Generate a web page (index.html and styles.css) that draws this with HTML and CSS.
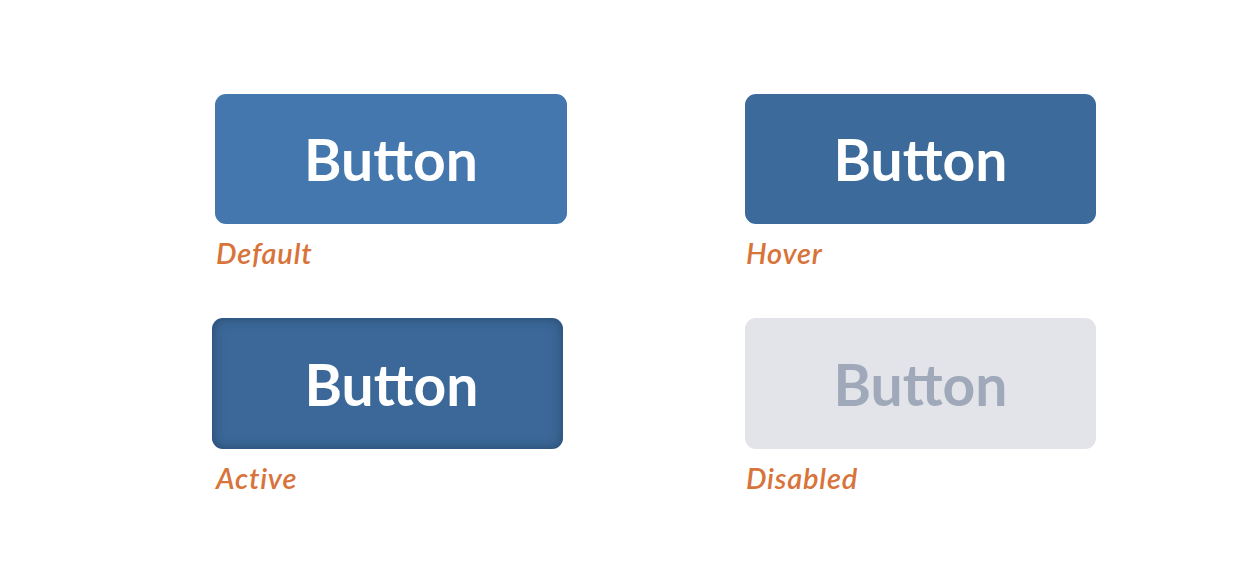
FILE: index.html
```html
<!DOCTYPE html>
<html>
<head>
<meta charset="utf-8">
<link rel="stylesheet" href="styles.css">
</head>
<body>
<div class="grid">
  <div class="cell">
    <div class="btn btn-default">Button</div>
    <div class="label">Default</div>
  </div>
  <div class="cell">
    <div class="btn btn-hover">Button</div>
    <div class="label">Hover</div>
  </div>
  <div class="cell">
    <div class="btn btn-active">Button</div>
    <div class="label">Active</div>
  </div>
  <div class="cell">
    <div class="btn btn-disabled">Button</div>
    <div class="label">Disabled</div>
  </div>
</div>
</body>
</html>
```

FILE: styles.css
```css
html, body {
  margin: 0;
  padding: 0;
  background: #ffffff;
}
body {
  font-family: Lato, "Noto Sans", sans-serif;
}
.grid {
  display: grid;
  grid-template-columns: 352px 351px;
  column-gap: 178px;
  row-gap: 48px;
  padding: 94px 0 0 215px;
}
.cell {
  display: flex;
  flex-direction: column;
  align-items: flex-start;
}
.btn {
  width: 352px;
  height: 130px;
  border-radius: 11px;
  display: flex;
  align-items: center;
  justify-content: center;
  font-weight: 700;
  font-size: 57px;
  color: #ffffff;
  box-sizing: border-box;
}
.btn-default {
  background: #4377ad;
}
.btn-hover {
  width: 351px;
  background: #3c6a9a;
}
.btn-active {
  width: 351px;
  height: 131px;
  padding-left: 8px;
  background: #3b6898;
  margin-left: -3px;
  box-shadow: inset 0 0 12px rgba(20, 40, 70, 0.5);
}
.btn-disabled {
  width: 351px;
  height: 131px;
  background: #e3e4ea;
  color: #a0a9b9;
}
.label {
  margin-top: 12px;
  padding-left: 1px;
  font-style: italic;
  font-weight: 600;
  font-size: 29px;
  letter-spacing: 0.8px;
  line-height: 34px;
  color: #d8733a;
}
```
